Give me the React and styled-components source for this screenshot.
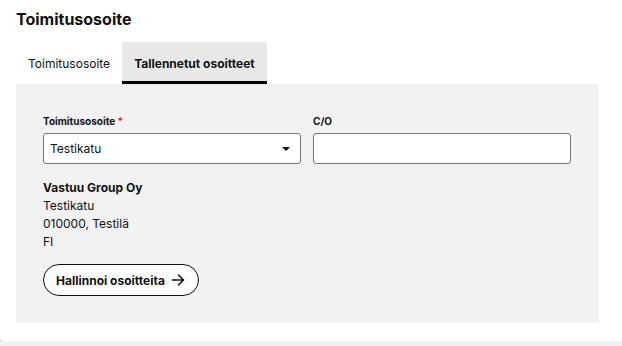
import React from 'react';
import styled, { createGlobalStyle } from 'styled-components';

const GlobalStyle = createGlobalStyle`
  html, body {
    margin: 0;
    padding: 0;
    background: #f0f0f0;
    font-family: Inter, "Liberation Sans", sans-serif;
    color: #111;
  }
`;

const Card = styled.div`
  height: 341px;
  box-sizing: border-box;
  background: #fff;
  border-radius: 0 0 0 4px;
  box-shadow: 0 1px 2px rgba(0, 0, 0, 0.18);
  padding: 8px 23px 0 16px;
`;

const Title = styled.h2`
  margin: 0 0 12px;
  font-size: 16px;
  line-height: 22px;
  font-weight: 700;
`;

const Tabs = styled.div`
  display: flex;
`;

const Tab = styled.button`
  height: 42px;
  box-sizing: border-box;
  padding: 3px 12px 0;
  border: 0;
  border-bottom: 3px solid ${({ $active }) => ($active ? '#000' : 'transparent')};
  background: ${({ $active }) => ($active ? '#e8e8e8' : 'transparent')};
  font-family: inherit;
  font-size: 12px;
  font-weight: ${({ $active }) => ($active ? 700 : 400)};
  color: #111;
  cursor: pointer;
`;

const Panel = styled.div`
  background: #f2f2f2;
  height: 239px;
  box-sizing: border-box;
  padding: 30px 28px 27px 27px;
`;

const Fields = styled.div`
  display: grid;
  grid-template-columns: 1fr 1fr;
  gap: 12px;
`;

const Field = styled.div`
  display: flex;
  flex-direction: column;
`;

const Label = styled.label`
  font-size: 10px;
  line-height: 14px;
  font-weight: 700;
  margin-bottom: 5px;
`;

const Required = styled.span`
  color: #d7262b;
`;

const Box = styled.div`
  height: 31px;
  box-sizing: border-box;
  background: #fff;
  border: 1px solid #777;
  border-radius: 3px;
  display: flex;
  align-items: center;
  justify-content: space-between;
  padding: 0 10px 0 6px;
  font-size: 12px;
`;

const Caret = styled.span`
  width: 0;
  height: 0;
  border-left: 4px solid transparent;
  border-right: 4px solid transparent;
  border-top: 4px solid #111;
  margin-top: 1px;
`;

const Address = styled.div`
  margin-top: 15px;
  font-size: 12px;
  line-height: 18px;
`;

const Company = styled.div`
  font-weight: 700;
`;

const ManageButton = styled.button`
  margin-top: 13px;
  height: 32px;
  display: inline-flex;
  align-items: center;
  gap: 6px;
  padding: 0 13px 0 12px;
  background: #fff;
  border: 1px solid #111;
  border-radius: 16px;
  font-family: inherit;
  font-size: 12px;
  font-weight: 700;
  color: #111;
  cursor: pointer;
`;

const Arrow = () => (
  <svg width="14" height="14" viewBox="0 0 14 14" fill="none" stroke="#111" strokeWidth="1.6" strokeLinecap="round" strokeLinejoin="round">
    <path d="M1.5 7h11M7.5 2l5 5-5 5" />
  </svg>
);

export default function App() {
  return (
    <>
      <GlobalStyle />
      <Card>
        <Title>Toimitusosoite</Title>
        <Tabs>
          <Tab>Toimitusosoite</Tab>
          <Tab $active>Tallennetut osoitteet</Tab>
        </Tabs>
        <Panel>
          <Fields>
            <Field>
              <Label>
                Toimitusosoite <Required>*</Required>
              </Label>
              <Box>
                Testikatu
                <Caret />
              </Box>
            </Field>
            <Field>
              <Label>C/O</Label>
              <Box />
            </Field>
          </Fields>
          <Address>
            <Company>Vastuu Group Oy</Company>
            <div>Testikatu</div>
            <div>010000, Testilä</div>
            <div>FI</div>
          </Address>
          <ManageButton>
            Hallinnoi osoitteita
            <Arrow />
          </ManageButton>
        </Panel>
      </Card>
    </>
  );
}
